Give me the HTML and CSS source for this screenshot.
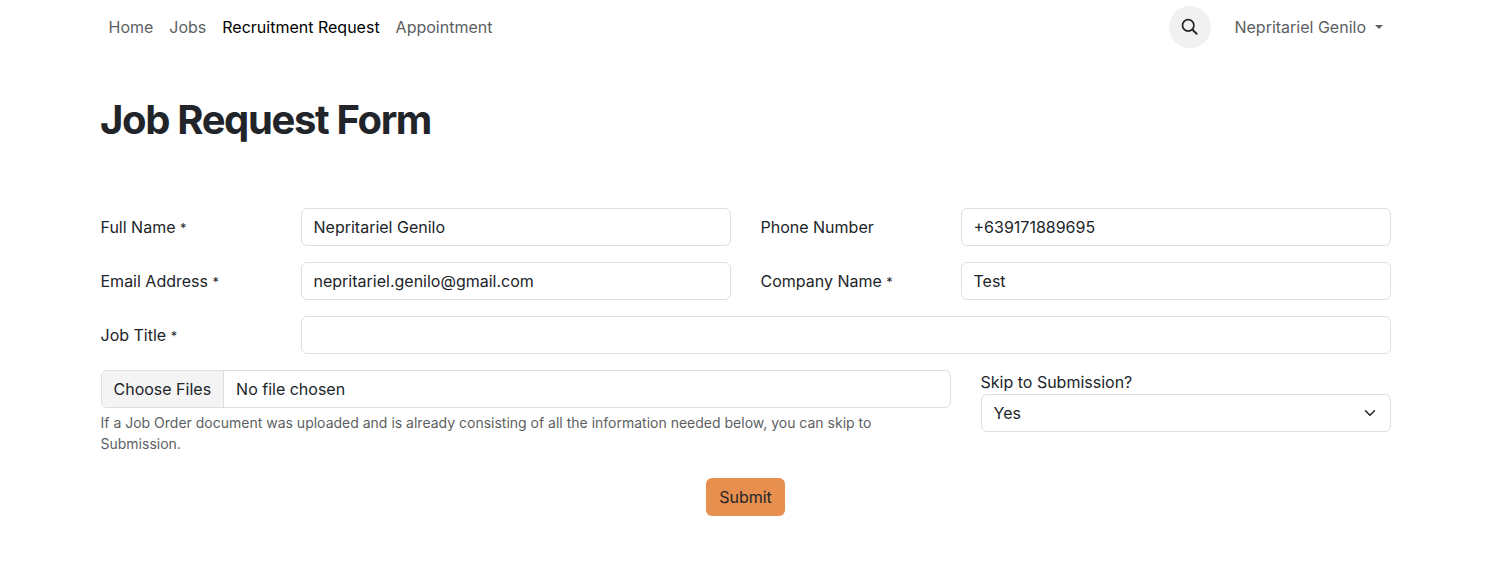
FILE: index.html
```
<!DOCTYPE html>
<html lang="en">
<head>
  <meta charset="UTF-8">
  <title>Job Request Form</title>
  <link rel="stylesheet" href="styles.css">
</head>
<body>
<header class="navbar">
  <nav class="nav-links">
    <a href="#">Home</a>
    <a href="#">Jobs</a>
    <a href="#" class="active">Recruitment Request</a>
    <a href="#">Appointment</a>
  </nav>
  <div class="nav-right">
    <button class="search-btn" aria-label="Search">
      <svg width="18" height="18" viewBox="0 0 18 18" fill="none" stroke="#212529" stroke-width="1.7">
        <circle cx="7.2" cy="7.4" r="5.7"/>
        <path d="M11.3 11.5L16.2 16.4" stroke-width="2"/>
      </svg>
    </button>
    <a href="#" class="user-menu">Nepritariel Genilo<span class="caret"></span></a>
  </div>
</header>

<main class="container">
  <h1>Job Request Form</h1>
  <form class="request-form">
    <div class="row">
      <div class="field">
        <label for="name">Full Name <span class="mark">*</span></label>
        <input id="name" type="text" class="control" value="Nepritariel Genilo">
      </div>
      <div class="field">
        <label for="phone">Phone Number</label>
        <input id="phone" type="tel" class="control" value="+639171889695">
      </div>
    </div>
    <div class="row">
      <div class="field">
        <label for="email">Email Address <span class="mark">*</span></label>
        <input id="email" type="email" class="control" value="nepritariel.genilo@gmail.com" spellcheck="false">
      </div>
      <div class="field">
        <label for="company">Company Name <span class="mark">*</span></label>
        <input id="company" type="text" class="control" value="Test">
      </div>
    </div>
    <div class="field">
      <label for="title">Job Title <span class="mark">*</span></label>
      <input id="title" type="text" class="control">
    </div>
    <div class="upload-row">
      <div class="upload">
        <div class="file-control">
          <span class="file-btn">Choose Files</span>
          <span class="file-name">No file chosen</span>
        </div>
        <p class="help">If a Job Order document was uploaded and is already consisting of all the information needed below, you can skip to Submission.</p>
      </div>
      <div class="skip">
        <label for="skip">Skip to Submission?</label>
        <select id="skip" class="control select">
          <option>Yes</option>
          <option>No</option>
        </select>
      </div>
    </div>
    <div class="actions">
      <button type="button" class="submit-btn">Submit</button>
    </div>
  </form>
</main>
</body>
</html>
```
FILE: styles.css
```
* {
  box-sizing: border-box;
}
body {
  margin: 0;
  font-family: Inter, "Open Sans", sans-serif;
  font-size: 16px;
  line-height: 24px;
  color: #212529;
  background: #fff;
}
input, select, button {
  font: inherit;
  color: inherit;
}
.navbar {
  display: flex;
  justify-content: space-between;
  align-items: center;
  height: 54px;
  padding: 0 106px 0 100.5px;
}
.nav-links {
  display: flex;
}
.nav-links a, .user-menu {
  padding: 8px;
  color: #5c5f62;
  text-decoration: none;
}
.nav-links .active {
  color: #000;
}
.nav-right {
  display: flex;
  align-items: center;
  gap: 15.5px;
}
.search-btn {
  display: flex;
  align-items: center;
  justify-content: center;
  width: 42px;
  height: 42px;
  padding: 0;
  border: 0;
  border-radius: 50%;
  background: #f1f1f1;
}
.caret {
  display: inline-block;
  margin-left: 9px;
  vertical-align: 4px;
  border-top: 4px solid;
  border-left: 4px solid transparent;
  border-right: 4px solid transparent;
}
.container {
  padding: 0 106.5px 0 100.5px;
}
h1 {
  margin: 41px 0 63px -0.5px;
  font-size: 40px;
  line-height: 50px;
  font-weight: 700;
  letter-spacing: -1.35px;
}
.request-form {
  display: flex;
  flex-direction: column;
  gap: 16px;
}
.row {
  display: grid;
  grid-template-columns: 1fr 1fr;
  gap: 30px;
}
.field {
  display: grid;
  grid-template-columns: 200px 1fr;
  align-items: center;
}
.mark {
  font-size: 12.8px;
  line-height: 1;
}
.control {
  width: 100%;
  min-width: 0;
  height: 38px;
  padding: 6px 12px;
  border: 1px solid #dedede;
  border-radius: 6px;
  background: #fff;
}
.upload-row {
  display: grid;
  grid-template-columns: 850px 1fr;
  gap: 30px;
}
.file-control {
  display: flex;
  height: 38px;
  border: 1px solid #dedede;
  border-radius: 6px;
  overflow: hidden;
}
.file-btn {
  padding: 6px 12px;
  border-right: 1px solid #dedede;
  background: #f4f4f4;
}
.file-name {
  padding: 6px 12px;
}
.help {
  margin: 4px 0 0;
  padding-right: 60px;
  font-size: 14px;
  line-height: 21px;
  color: #5c5f62;
}
.skip label {
  display: block;
}
.select {
  appearance: none;
  background: #fff url("data:image/svg+xml,%3Csvg xmlns='http://www.w3.org/2000/svg' viewBox='0 0 16 16'%3E%3Cpath fill='none' stroke='%23212529' stroke-linecap='round' stroke-linejoin='round' stroke-width='2' d='m2 5 6 6 6-6'/%3E%3C/svg%3E") no-repeat right 12px center / 16px 12px;
}
.actions {
  display: flex;
  justify-content: center;
  margin-top: 8px;
}
.submit-btn {
  height: 38px;
  padding: 6px 13px;
  border: 0;
  border-radius: 6px;
  background: #e78f4e;
}
```
